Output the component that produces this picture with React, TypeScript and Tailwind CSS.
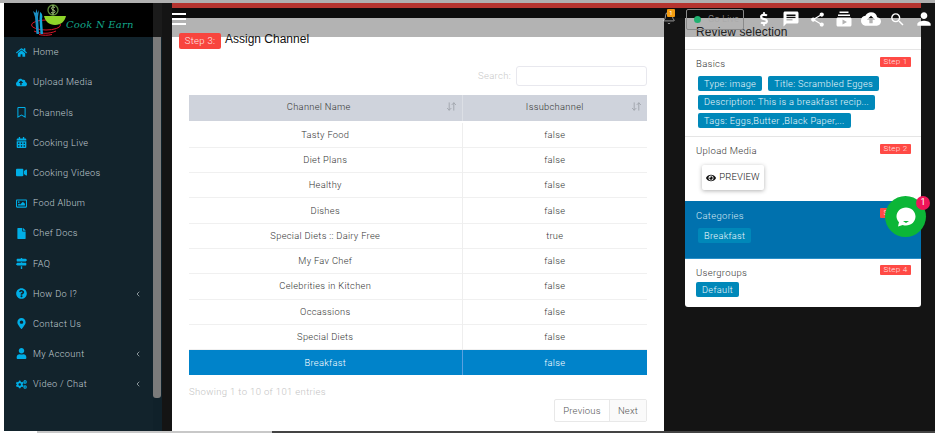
import { ArrowDownUp, Bell, ChevronLeft } from "lucide-react";
import {
  FaCalendarAlt,
  FaCloudUploadAlt,
  FaCogs,
  FaDollarSign,
  FaEye,
  FaFile,
  FaHome,
  FaMapMarkerAlt,
  FaMapSigns,
  FaQuestionCircle,
  FaRegBookmark,
  FaRegImage,
  FaUser,
  FaVideo,
} from "react-icons/fa";
import { MdChat, MdCloudUpload, MdPerson, MdSearch, MdShare, MdSubscriptions } from "react-icons/md";

const navItems = [
  { label: "Home", icon: FaHome },
  { label: "Upload Media", icon: FaCloudUploadAlt },
  { label: "Channels", icon: FaRegBookmark },
  { label: "Cooking Live", icon: FaCalendarAlt },
  { label: "Cooking Videos", icon: FaVideo },
  { label: "Food Album", icon: FaRegImage },
  { label: "Chef Docs", icon: FaFile },
  { label: "FAQ", icon: FaMapSigns },
  { label: "How Do I?", icon: FaQuestionCircle, more: true },
  { label: "Contact Us", icon: FaMapMarkerAlt },
  { label: "My Account", icon: FaUser, more: true },
  { label: "Video / Chat", icon: FaCogs, more: true },
];

const channels = [
  ["Tasty Food", "false"],
  ["Diet Plans", "false"],
  ["Healthy", "false"],
  ["Dishes", "false"],
  ["Special Diets :: Dairy Free", "true"],
  ["My Fav Chef", "false"],
  ["Celebrities in Kitchen", "false"],
  ["Occassions", "false"],
  ["Special Diets", "false"],
  ["Breakfast", "false"],
];

const topIcons = [
  { icon: FaDollarSign, size: 14 },
  { icon: MdChat, size: 18 },
  { icon: MdShare, size: 17 },
  { icon: MdSubscriptions, size: 18 },
  { icon: MdCloudUpload, size: 20 },
  { icon: MdSearch, size: 17 },
  { icon: MdPerson, size: 20 },
];

function Logo() {
  return (
    <svg width="36" height="34" viewBox="0 0 36 34" className="shrink-0">
      {/* swirl under the bowl */}
      <ellipse cx="16" cy="22" rx="14.500" ry="5" fill="none" stroke="#d8152a" strokeWidth="1" />
      <path d="M4 28c6 3 16 3 22 0M9 31.500c4 1 9 1 13 0" fill="none" stroke="#d8152a" strokeWidth="1" />
      {/* cutlery */}
      <path d="M3 8l2 6 1.500 17h2.500l-1-17 1-7-1.500 3-1-4-1 4z" fill="#1b8fc4" />
      <path d="M10 9c2 1 3 4 2 7l1 15h-2.500l-1-15z" fill="#12a5d8" />
      {/* bowl */}
      <path d="M14 13h22c-1 5-5 9-11 9s-10-4-11-9z" fill="#8fd42a" />
      {/* dollar */}
      <circle cx="23" cy="7" r="5" fill="none" stroke="#5d8a3a" strokeWidth="1.300" />
      <path d="M25 4.500c-1.500-1-4-.5-3.500 1.200s3.500 1 3.500 2.800-2.500 1.800-4 1M23 2v10" fill="none" stroke="#b4d98a" strokeWidth="0.900" />
    </svg>
  );
}

function Sidebar() {
  return (
    <div className="flex h-full w-[158px] shrink-0 flex-col">
      <div className="flex h-[34px] shrink-0">
        <div className="flex w-[149px] items-start bg-black pl-[26px]">
          <Logo />
          <span className="mt-[15px] font-['DejaVu_Serif',serif] text-[10px] leading-[14px] tracking-[0.2px] text-[#12a58a] italic">
            Cook N Earn
          </span>
        </div>
        <div className="w-[9px] bg-[#1b1b1b]" />
      </div>
      <div className="flex min-h-0 flex-1">
        <nav className="w-[149px] bg-[#12232c]">
          {navItems.map((item) => (
            <div key={item.label} className="flex h-[30.2px] items-center pl-[12px] font-['Roboto',sans-serif] text-[9.2px] font-light tracking-[0.35px] text-[#c0ccd2]">
              <span className="flex w-[17px] shrink-0 text-[#00aee6]">
                <item.icon size={11} />
              </span>
              <span className="flex-1 whitespace-nowrap">{item.label}</span>
              {item.more && <ChevronLeft size={8} strokeWidth={2} className="mr-[11px] text-[#c4ced2]" />}
            </div>
          ))}
        </nav>
        <div className="w-[9px] bg-[#10212a]">
          <div className="h-[361px] w-[8px] rounded-b-[3px] bg-[#7b7b7b]" />
        </div>
      </div>
    </div>
  );
}

function TopBar() {
  return (
    <div className="relative z-10 h-[10px] shrink-0 bg-[#0d0d0d]">
      <div className="flex items-start">
        {/* hamburger */}
        <div className="mt-[5px] flex w-[14px] shrink-0 flex-col gap-[3px]">
          <div className="h-[2px] bg-white" />
          <div className="h-[2px] bg-white" />
          <div className="h-[2px] bg-white" />
        </div>
        <div className="relative mt-[2px] ml-[476px] h-[14px] w-[16px] shrink-0 text-white">
          <Bell size={14} strokeWidth={1} className="mt-[1px]" />
          <span className="absolute -top-[1px] left-[5px] flex h-[8px] w-[8px] items-center justify-center rounded-[1px] bg-[#f39c12] font-['Roboto',sans-serif] text-[6px] leading-none">1</span>
        </div>
        <div className="mt-[1px] ml-[8px] flex h-[21px] w-[58px] shrink-0 items-center whitespace-nowrap rounded-[2px] border border-[#8a8a8a] pl-[7px] font-['Roboto',sans-serif] text-[9px] font-light tracking-[0.3px] text-[#a8a8a8]">
          <span className="mr-[7px] h-[7px] w-[7px] shrink-0 rounded-full bg-[#20b070]" />
          Go Live
        </div>
        <div className="ml-[7px] flex shrink-0 text-white">
          {topIcons.map((item, i) => (
            <span key={i} className="flex h-[22px] w-[26.7px] items-center justify-center">
              <item.icon size={item.size} />
            </span>
          ))}
        </div>
      </div>
    </div>
  );
}

function MainCard() {
  return (
    <div className="flex w-[492px] shrink-0 flex-col bg-white font-['Roboto',sans-serif]">
      <div className="h-[19px] shrink-0 bg-[#b3b3b3]" />
      <div className="relative -mt-[5px] flex items-center pl-[7px]">
        <span className="flex h-[16px] w-[42px] items-center justify-center rounded-[2px] bg-[#f8453e] text-[9.5px] font-light tracking-[0.3px] text-[#ffe9e8]">Step 3:</span>
        <span className="ml-[4px] -translate-y-[2px] font-['Liberation_Sans',sans-serif] text-[12px] text-[#111]">Assign Channel</span>
      </div>
      <div className="mt-[16px] flex h-[20px] items-center justify-end pr-[17px]">
        <span className="mr-[5px] text-[9.5px] font-light tracking-[0.3px] text-[#c8c8c8]">Search:</span>
        <div className="h-[20px] w-[131px] rounded-[3px] border border-[#e8e8ee]" />
      </div>
      <table className="mt-[9px] ml-[17px] w-[458px] table-fixed border-collapse text-center text-[9.3px] font-light tracking-[0.3px] text-[#333]">
        <thead>
          <tr className="h-[27px] border-b-2 border-white bg-[#cfd3dc]">
            <th className="relative w-[273px] border-r border-[#dcdfe5] pr-[13px] pb-[2px] font-light">
              Channel Name
              <ArrowDownUp size={11} className="absolute top-[6px] right-[5px] text-[#a0a4ac]" />
            </th>
            <th className="relative pb-[2px] font-light">
              Issubchannel
              <ArrowDownUp size={11} className="absolute top-[6px] right-[5px] text-[#a0a4ac]" />
            </th>
          </tr>
        </thead>
        <tbody>
          {channels.map(([name, sub]) => {
            const picked = name === "Breakfast";
            return (
              <tr key={name} className={picked ? "h-[25.3px] bg-[#0083ca] text-white" : "h-[25.3px] border-b border-[#f0f0f0]"}>
                <td className={picked ? "border-r border-[#5aa0e0]" : "border-r border-[#eeeeee]"}>{name}</td>
                <td>{sub}</td>
              </tr>
            );
          })}
        </tbody>
      </table>
      <div className="mt-[10px] ml-[17px] text-[9.5px] font-light tracking-[0.35px] text-[#c4c4c4]">Showing 1 to 10 of 101 entries</div>
      <div className="mr-[17px] flex justify-end">
        <div className="flex h-[23px] rounded-[2px] border border-[#e8e8e8] text-[9.5px] font-light tracking-[0.2px] text-[#555]">
          <span className="flex w-[54px] items-center justify-center">Previous</span>
          <span className="flex w-[37px] items-center justify-center border-l border-[#e8e8e8] bg-[#fafafa]">Next</span>
        </div>
      </div>
    </div>
  );
}

function StepBadge({ n }: { n: number }) {
  return (
    <span className="flex h-[10px] w-[31px] items-center justify-center rounded-[1px] bg-[#ff4a45] text-[8px] tracking-[0.3px] text-[#ffe4e3]">
      Step {n}
    </span>
  );
}

function Chip({ children }: { children: string }) {
  return (
    <span className="flex h-[15px] items-center whitespace-nowrap rounded-[2px] bg-[#0088b9] px-[6px] text-[9.2px] font-light tracking-[0.33px] text-[#eef8fc]">
      {children}
    </span>
  );
}

function ReviewPanel() {
  return (
    <div className="flex h-[289px] w-[236px] shrink-0 flex-col overflow-hidden rounded-b-[3px] bg-white font-['Roboto',sans-serif] text-[9.5px] font-light tracking-[0.3px] text-[#333]">
      <div className="h-[19px] shrink-0 bg-[#b3b3b3] pt-[8px] pl-[11px] font-['Liberation_Sans',sans-serif] text-[12px] leading-[13px] font-normal tracking-[0.1px] text-[#222]">
        Review selection
      </div>
      <div className="h-[13px] shrink-0 border-b border-[#e5e5e5]" />
      <section className="h-[87px] shrink-0 border-b border-[#e5e5e5] px-[11px] pt-[7px]">
        <div className="flex items-start justify-between">
          <span className="leading-[14px]">Basics</span>
          <span className="mr-[-1px]"><StepBadge n={1} /></span>
        </div>
        <div className="mt-[5px] flex flex-wrap gap-x-[6px] gap-y-[3.500px] pl-[2px]">
          <Chip>Type: image</Chip>
          <Chip>Title: Scrambled Egges</Chip>
          <Chip>Description: This is a breakfast recip...</Chip>
          <Chip>Tags: Eggs,Butter ,Black Paper,...</Chip>
        </div>
      </section>
      <section className="h-[64px] shrink-0 px-[11px] pt-[7px]">
        <div className="flex items-start justify-between">
          <span className="leading-[14px]">Upload Media</span>
          <span className="mr-[-1px]"><StepBadge n={2} /></span>
        </div>
        <div className="mt-[7px] ml-[6px] flex h-[25px] w-[62px] items-center justify-center gap-[3px] rounded-[2px] bg-white text-[9.5px] font-light tracking-[0.1px] text-[#111] shadow-[0_1px_4px_rgba(0,0,0,0.3)]">
          <FaEye size={10} />
          PREVIEW
        </div>
      </section>
      <section className="h-[58px] shrink-0 border-b border-[#2a8fc8] bg-[#0071ae] px-[11px] pt-[8px] text-[#d4e8f2]">
        <div className="flex items-start justify-between">
          <span className="leading-[14px]">Categories</span>
          <span className="mr-[-1px] -mt-[1px]"><StepBadge n={3} /></span>
        </div>
        <div className="mt-[5px] flex pl-[2px]"><Chip>Breakfast</Chip></div>
      </section>
      <section className="flex-1 px-[11px] pt-[7px]">
        <div className="flex items-start justify-between">
          <span className="leading-[14px]">Usergroups</span>
          <span className="mr-[-1px] -mt-[1px]"><StepBadge n={4} /></span>
        </div>
        <div className="mt-[2px] flex"><Chip>Default</Chip></div>
      </section>
    </div>
  );
}

export default function App() {
  return (
    <div className="relative flex h-[433px] w-[935px] flex-col overflow-hidden bg-[#141414]">
      <div className="h-[3px] shrink-0 bg-[#b0b0b0]" />
      <div className="flex min-h-0 flex-1">
        <div className="w-[4px] shrink-0 bg-white" />
        <Sidebar />
        <div className="w-[10px] shrink-0" />
        <div className="flex w-[749px] shrink-0 flex-col">
          <div className="h-[5px] shrink-0 bg-[#b5342f]" />
          <TopBar />
          <div className="flex min-h-0 flex-1">
            <MainCard />
            <div className="w-[21px] shrink-0" />
            <ReviewPanel />
          </div>
        </div>
      </div>
      <div className="flex h-[2px] shrink-0">
        <div className="w-[37px] bg-white" />
        <div className="w-[235px] bg-[#c8c8c8]" />
        <div className="flex-1 bg-[#444]" />
      </div>

      {/* chat widget */}
      <div className="absolute top-[196px] left-[885px] flex h-[41px] w-[41px] items-center justify-center rounded-full bg-[#0cb637]">
        <svg width="22" height="22" viewBox="0 0 22 22">
          <path d="M11 1.500c5.300 0 9.500 3.900 9.500 9s-4.200 9-9.500 9c-1.200 0-2.300-.2-3.300-.6L3 20.500l1-4.300C2.500 14.600 1.500 12.700 1.500 10.500c0-5.100 4.200-9 9.500-9z" fill="#fff" />
          <path d="M8 15h6l-3 2z" fill="#0cb637" />
        </svg>
        <span className="absolute top-0 -right-[4px] flex h-[14px] w-[14px] items-center justify-center rounded-full bg-[#f01558] font-['Roboto',sans-serif] text-[9px] text-white">1</span>
      </div>
    </div>
  );
}
